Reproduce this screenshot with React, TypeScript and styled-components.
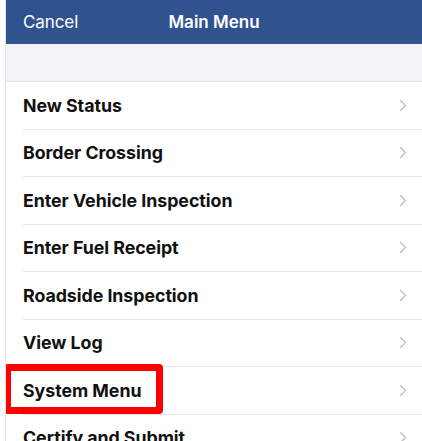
import React from "react"
import styled, { createGlobalStyle, css } from "styled-components"

const GlobalStyle = createGlobalStyle`
    html, body {
        margin: 0;
        padding: 0;
        background: #ffffff;
        font-family: Inter, "Noto Sans", "Liberation Sans", sans-serif;
        -webkit-font-smoothing: antialiased;
    }
`

const Screen = styled.div`
    margin-left: 5px;
    height: 441px;
    overflow: hidden;
    border-left: 1px solid #e6e6ea;
    background: #ffffff;
`

const NavBar = styled.header`
    position: relative;
    height: 44px;
    background: #30538f;
    display: flex;
    align-items: center;
    justify-content: center;
    color: #ffffff;
`

const NavButton = styled.button`
    position: absolute;
    left: 17px;
    top: 0;
    height: 100%;
    padding: 0;
    border: none;
    background: none;
    color: #ffffff;
    font: inherit;
    font-size: 17px;
    letter-spacing: -0.1px;
`

const NavTitle = styled.h1`
    margin: 0;
    font-size: 17px;
    font-weight: 600;
    letter-spacing: 0;
`

const GroupGap = styled.div`
    height: 37px;
    background: #f2f2f7;
    border-bottom: 1px solid #e4e4e9;
`

const List = styled.ul`
    list-style: none;
    margin: 0;
    padding: 0 0 0 17px;
`

const Row = styled.li<{ $highlighted?: boolean }>`
    position: relative;
    height: 46.5px;
    display: flex;
    align-items: center;
    justify-content: space-between;
    border-bottom: 1px solid #e6e6ea;
    padding-right: 15px;

    ${({ $highlighted }) => $highlighted && css`
        &::after {
            content: "";
            position: absolute;
            left: -19px;
            top: -3px;
            width: 159px;
            height: 50px;
            box-sizing: border-box;
            border: 7px solid #ff0000;
            border-radius: 4px;
        }
    `}
`

const Label = styled.span`
    font-size: 17.8px;
    font-weight: 700;
    color: #111111;
    letter-spacing: -0.05px;
`

const Chevron = () => (
    <svg width="8" height="13" viewBox="0 0 8 13" fill="none">
        <path d="M1.5 1.5L6.5 6.5L1.5 11.5" stroke="#c5c5c9" strokeWidth="1.6" strokeLinecap="round" strokeLinejoin="round" />
    </svg>
)

const items = [
    "New Status",
    "Border Crossing",
    "Enter Vehicle Inspection",
    "Enter Fuel Receipt",
    "Roadside Inspection",
    "View Log",
    "System Menu",
    "Certify and Submit",
]

const App = () => {
    return (
        <>
            <GlobalStyle />
            <Screen>
                <NavBar>
                    <NavButton>Cancel</NavButton>
                    <NavTitle>Main Menu</NavTitle>
                </NavBar>
                <GroupGap />
                <List>
                    {items.map(item => (
                        <Row key={item} $highlighted={item === "System Menu"}>
                            <Label>{item}</Label>
                            <Chevron />
                        </Row>
                    ))}
                </List>
            </Screen>
        </>
    )
}

export default App
